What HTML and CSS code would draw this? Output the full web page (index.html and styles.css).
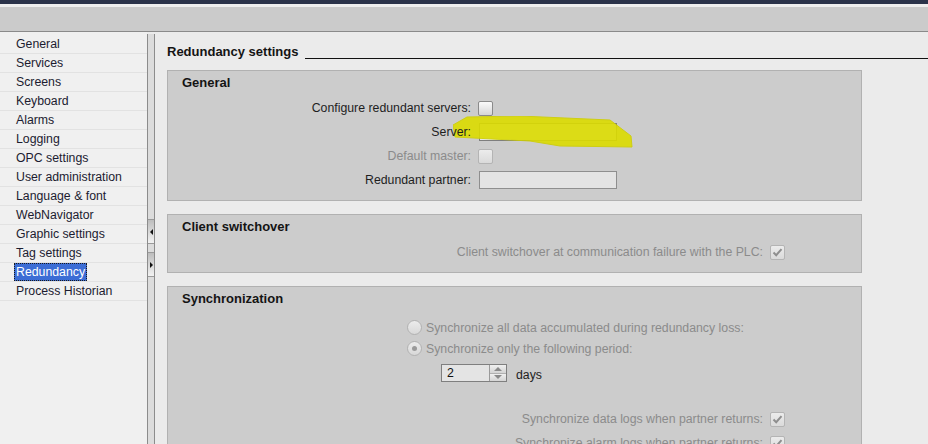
FILE: index.html
```html
<!DOCTYPE html>
<html>
<head>
<meta charset="utf-8">
<link rel="stylesheet" href="styles.css">
</head>
<body>
<div class="topbar"><div class="tb-dark"></div><div class="tb-light"></div><div class="tb-gray"></div></div>
<div class="main">
  <nav class="nav">
    <div class="item">General</div>
    <div class="item">Services</div>
    <div class="item">Screens</div>
    <div class="item">Keyboard</div>
    <div class="item">Alarms</div>
    <div class="item">Logging</div>
    <div class="item">OPC settings</div>
    <div class="item">User administration</div>
    <div class="item">Language &amp; font</div>
    <div class="item">WebNavigator</div>
    <div class="item">Graphic settings</div>
    <div class="item">Tag settings</div>
    <div class="item"><span class="sel">Redundancy</span></div>
    <div class="item">Process Historian</div>
  </nav>
  <div class="splitter">
    <div class="sp-btn sp-top"><span class="tri-left"></span></div>
    <div class="sp-btn sp-bot"><span class="tri-right"></span></div>
  </div>
  <div class="content">
    <div class="heading"><span class="heading-text">Redundancy settings</span><span class="heading-line"></span></div>

    <div class="group g1">
      <div class="gtitle">General</div>
      <div class="rows">
        <div class="row">
          <span class="label lab-gen">Configure redundant servers:</span>
          <span class="cb"></span>
        </div>
        <div class="row rel">
          <span class="label lab-gen over">Server:</span>
          <span class="inp"></span>
          <svg class="smear" width="182" height="34" viewBox="0 0 182 34"><polygon points="0,9 14,1 67,0 157,4 178,20 179,31 107,30 77,25 2,21" fill="#dcdc00" stroke="#cfcf00" stroke-width="1" opacity="0.9"/></svg>
        </div>
        <div class="row">
          <span class="label lab-gen dis">Default master:</span>
          <span class="cb cb-dis"></span>
        </div>
        <div class="row">
          <span class="label lab-gen">Redundant partner:</span>
          <span class="inp inp-dis"></span>
        </div>
      </div>
    </div>

    <div class="group g2">
      <div class="gtitle">Client switchover</div>
      <div class="rows">
        <div class="row">
          <span class="label lab-wide dis">Client switchover at communication failure with the PLC:</span>
          <span class="cb cb-dis"><svg width="13" height="13" viewBox="0 0 13 13"><path d="M2.5 6.5 L5.2 9.2 L10.5 3.2" fill="none" stroke="#8e8e8e" stroke-width="2"/></svg></span>
        </div>
      </div>
    </div>

    <div class="group g3">
      <div class="gtitle">Synchronization</div>
      <div class="sync">
        <div class="radio-row"><span class="radio"></span><span class="dis">Synchronize all data accumulated during redundancy loss:</span></div>
        <div class="radio-row"><span class="radio on"></span><span class="dis">Synchronize only the following period:</span></div>
        <div class="spin-row">
          <span class="spin"><span class="spin-val">2</span><span class="spin-btns"><span class="sb"><span class="tri-up"></span></span><span class="sb"><span class="tri-down"></span></span></span></span>
          <span class="days">days</span>
        </div>
        <div class="row first-log">
          <span class="label lab-wide dis">Synchronize data logs when partner returns:</span>
          <span class="cb cb-dis"><svg width="13" height="13" viewBox="0 0 13 13"><path d="M2.5 6.5 L5.2 9.2 L10.5 3.2" fill="none" stroke="#8e8e8e" stroke-width="2"/></svg></span>
        </div>
        <div class="row">
          <span class="label lab-wide dis">Synchronize alarm logs when partner returns:</span>
          <span class="cb cb-dis"><svg width="13" height="13" viewBox="0 0 13 13"><path d="M2.5 6.5 L5.2 9.2 L10.5 3.2" fill="none" stroke="#8e8e8e" stroke-width="2"/></svg></span>
        </div>
      </div>
    </div>
  </div>
</div>
</body>
</html>
```

FILE: styles.css
```css
html, body {
  margin: 0;
  padding: 0;
  height: 444px;
  overflow: hidden;
}
body {
  background: #ebebeb;
  font-family: "Liberation Sans", Arial, sans-serif;
  font-size: 12.3px;
  color: #1e1e1e;
}
.topbar {
  display: flex;
  flex-direction: column;
}
.tb-dark { height: 4px; background: #2b334a; }
.tb-light { height: 3px; background: #eeeeee; }
.tb-gray { height: 24px; background: #cbcbcb; border-bottom: 1px solid #8a8a8a; }

.main {
  display: flex;
  height: 412px;
  overflow: hidden;
}
.nav {
  width: 147px;
  background: #f0f0f0;
  padding-top: 3px;
  flex-shrink: 0;
}
.item {
  height: 18px;
  line-height: 18px;
  padding-left: 16px;
  border-bottom: 1px solid #e2e2e2;
  color: #1c1c30;
}
.sel {
  display: inline-block;
  margin-left: -2px;
  padding: 0 1px;
  height: 16px;
  line-height: 16px;
  background: #3c6dd5;
  color: #ffffff;
  border: 1px dotted #1a1a1a;
}
.splitter {
  width: 6px;
  margin-top: 2px;
  border-left: 1px solid #8c8c8c;
  border-right: 1px solid #8c8c8c;
  background: #dcdcdc;
  flex-shrink: 0;
  display: flex;
  flex-direction: column;
}
.sp-btn {
  height: 23px;
  border-top: 1px solid #9a9a9a;
  border-bottom: 1px solid #9a9a9a;
  background: linear-gradient(to bottom, #bdbdbd, #f2f2f2);
  display: flex;
  align-items: center;
  justify-content: center;
}
.sp-top { margin-top: 185px; }
.sp-bot { margin-top: 8px; }
.tri-left {
  width: 0; height: 0;
  border-top: 3px solid transparent;
  border-bottom: 3px solid transparent;
  border-right: 3px solid #111;
}
.tri-right {
  width: 0; height: 0;
  border-top: 3px solid transparent;
  border-bottom: 3px solid transparent;
  border-left: 3px solid #111;
}
.content {
  flex: 1;
  padding: 12px 0 0 12px;
  min-width: 0;
}
.heading {
  display: flex;
  align-items: flex-end;
  height: 16px;
}
.heading-text {
  font-size: 13px;
  font-weight: bold;
  line-height: 16px;
  color: #141414;
}
.heading-line {
  flex: 1;
  margin-left: 7px;
  margin-bottom: 1px;
  border-bottom: 1px solid #111;
}
.group {
  width: 695px;
  box-sizing: border-box;
  background: #cccccc;
  border: 1px solid #b1b1b1;
}
.g1 { margin-top: 10px; }
.g2 { margin-top: 13px; }
.g3 { margin-top: 13px; height: 170px; }
.gtitle {
  padding: 4px 14px 0 14px;
  height: 16px;
  line-height: 16px;
  font-size: 13px;
  font-weight: bold;
  color: #141414;
}
.rows {
  padding: 5px 0 8px 0;
}
.row {
  display: flex;
  align-items: center;
  height: 24px;
  gap: 7px;
}
.rel { position: relative; }
.label {
  text-align: right;
  flex-shrink: 0;
  white-space: nowrap;
}
.over {
  position: relative;
  z-index: 2;
}
.lab-gen { width: 303px; }
.lab-wide { width: 595px; }
.dis { color: #8b8b8b; }
.cb {
  width: 13px;
  height: 13px;
  border: 1px solid #8a8a8a;
  border-radius: 2px;
  background: linear-gradient(to bottom, #fafafa, #d6d6d6);
  display: flex;
  align-items: center;
  justify-content: center;
}
.cb-dis {
  border-color: #b4b4b4;
  background: linear-gradient(to bottom, #ececec, #dadada);
}
.inp {
  width: 136px;
  height: 16px;
  border: 1px solid #7e7e7e;
  background: #e6e6e6;
  margin-left: 1px;
}
.inp-dis {
  border-color: #8e8e8e;
  background: #e3e3e3;
}
.smear {
  position: absolute;
  left: 285px;
  top: -4px;
  z-index: 1;
}
.sync {
  padding-top: 10px;
}
.radio-row {
  display: flex;
  align-items: center;
  height: 21px;
  padding-left: 239px;
  gap: 4px;
  white-space: nowrap;
}
.radio {
  width: 13px;
  height: 13px;
  border: 1px solid #b2b2b2;
  border-radius: 50%;
  background: linear-gradient(to bottom, #ececec, #d8d8d8);
  display: flex;
  align-items: center;
  justify-content: center;
}
.radio.on::after {
  content: "";
  width: 5px;
  height: 5px;
  border-radius: 50%;
  background: #9a9a9a;
}
.spin-row {
  display: flex;
  align-items: center;
  margin-top: 5px;
  padding-left: 273px;
  height: 18px;
}
.spin {
  display: flex;
  width: 66px;
  height: 18px;
  box-sizing: border-box;
  border: 1px solid #7f7f7f;
  background: #e4e4e4;
}
.spin-val {
  flex: 1;
  padding-left: 5px;
  line-height: 16px;
  color: #111;
}
.spin-btns {
  width: 16px;
  border-left: 1px solid #9a9a9a;
  display: flex;
  flex-direction: column;
}
.sb {
  flex: 1;
  display: flex;
  align-items: center;
  justify-content: center;
  background: linear-gradient(to bottom, #f0f0f0, #d4d4d4);
}
.sb + .sb { border-top: 1px solid #b0b0b0; }
.tri-up {
  width: 0; height: 0;
  border-left: 4px solid transparent;
  border-right: 4px solid transparent;
  border-bottom: 4px solid #8a8a8a;
}
.tri-down {
  width: 0; height: 0;
  border-left: 4px solid transparent;
  border-right: 4px solid transparent;
  border-top: 4px solid #8a8a8a;
}
.days {
  margin-left: 9px;
  color: #1e1e1e;
  line-height: 18px;
  padding-top: 3px;
}
.first-log { margin-top: 25px; }
```
